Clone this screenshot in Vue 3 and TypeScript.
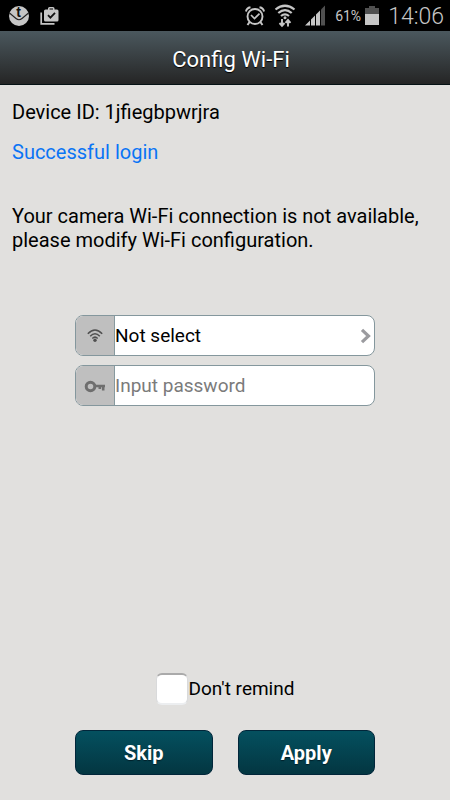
<script setup lang="ts">
import { ref } from 'vue'

const deviceId = ref<string>('1jfiegbpwrjra')
const network = ref<string>('')
const password = ref<string>('')
const dontRemind = ref<boolean>(false)
</script>

<template>
  <div class="screen">
    <div class="status">
      <svg class="badge-icon" width="22" height="22" viewBox="0 0 22 22" aria-hidden="true">
        <circle cx="11" cy="11" r="10" fill="#c6c6c6" />
        <path d="M1.5 8 L8 13.5 Q11 16 14 13.5 L20.5 8" fill="none" stroke="#222" stroke-width="1.1" />
        <text x="10.5" y="12" text-anchor="middle" class="badge-letter">t</text>
      </svg>
      <svg width="20" height="22" viewBox="0 0 20 22" aria-hidden="true">
        <path d="M1.2 7.5V18.800H14.5" fill="none" stroke="#c6c6c6" stroke-width="1.7" />
        <path d="M5.5 4.500H8V3.500Q8 2 9.500 2H13Q14.500 2 14.500 3.500V4.500H17Q18.500 4.500 18.500 6V15Q18.500 16.500 17 16.500H5.500Q4 16.500 4 15V6Q4 4.500 5.500 4.500ZM9.500 3.400V4.500H13V3.400Z" fill="#c6c6c6" fill-rule="evenodd" />
        <path d="M8 10.200L10.400 12.600L15 7.800" fill="none" stroke="#111" stroke-width="1.8" />
      </svg>
      <div class="status-right">
        <svg width="20" height="22" viewBox="0 0 20 22" fill="none" stroke="#c6c6c6" aria-hidden="true">
          <circle cx="10" cy="11.500" r="7.500" stroke-width="1.900" />
          <path d="M1 6.500Q1.500 3 5.500 2.300M19 6.500Q18.500 3 14.500 2.300M4.600 17L2.500 20M15.400 17L17.500 20" stroke-width="2" />
          <path d="M6 10L9.500 13.500L14.500 8.700" stroke-width="1.700" />
        </svg>
        <svg width="22" height="24" viewBox="0 0 22 24" fill="none" stroke="#c6c6c6" aria-hidden="true">
          <path d="M1.500 5.500Q11 -2 20.500 5.500M4.300 9Q11 3.200 17.700 9M7 12Q11 8.600 15 12" stroke-width="2.200" />
          <circle cx="11" cy="13.700" r="1.500" fill="#c6c6c6" stroke="none" />
          <path d="M8 15V22M5.500 19L8 21.800L10.500 19M14 22.500V16M11.500 18.800L14 16L16.500 18.800" stroke-width="1.900" />
        </svg>
        <svg width="21" height="21" viewBox="0 0 21 21" aria-hidden="true">
          <path d="M16 4.500L20 .5V20.500H16Z" fill="#505050" />
          <path d="M11 9.500L15 5.500V20.500H11ZM6 14.500L10 10.500V20.500H6ZM0 20.500L5 15.500V20.500Z" fill="#c6c6c6" />
        </svg>
        <div class="battery">
          <span class="percent">61%</span>
          <svg width="14" height="21" viewBox="0 0 14 21" aria-hidden="true">
            <path d="M0 3H4V1H10V3H14V9H0Z" fill="#505050" />
            <path d="M0 9H14V20H0Z" fill="#c6c6c6" />
          </svg>
        </div>
        <span class="clock">14:06</span>
      </div>
    </div>

    <header class="title-bar">
      <h1>Config Wi-Fi</h1>
    </header>

    <main class="content">
      <section class="info">
        <p>Device ID: {{ deviceId }}</p>
        <p class="login-state">Successful login</p>
        <p class="message">Your camera Wi-Fi connection is not available, please modify Wi-Fi configuration.</p>
      </section>

      <form id="wifi-form" class="fields" @submit.prevent>
        <div class="field">
          <label class="field-icon" for="network" aria-label="Wi-Fi network">
            <svg width="16" height="16" viewBox="0 0 16 16" fill="none" stroke="#505050" aria-hidden="true">
              <path d="M.8 5.800Q8 -1.800 15.200 5.800M3.200 8.200Q8 3.200 12.800 8.200M5.300 10.500Q8 7.800 10.700 10.500" stroke-width="1.500" />
              <circle cx="8" cy="12.300" r="1.700" fill="#505050" stroke="none" />
            </svg>
          </label>
          <select id="network" v-model="network">
            <option value="">Not select</option>
          </select>
          <svg class="chevron" width="12" height="16" viewBox="0 0 12 16" aria-hidden="true">
            <path d="M2 1.800L8.500 8L2 14.200" fill="none" stroke="#9b9b9f" stroke-width="3.200" />
          </svg>
        </div>
        <div class="field">
          <label class="field-icon" for="password" aria-label="Password">
            <svg width="22" height="14" viewBox="0 0 22 14" fill="none" stroke="#6e6e6e" aria-hidden="true">
              <circle cx="6.500" cy="7.500" r="4.300" stroke-width="3" />
              <path d="M11 7H21M19.200 6.500V11.500M15.800 6.500V10" stroke-width="2.600" />
            </svg>
          </label>
          <input id="password" v-model="password" type="password" placeholder="Input password" />
        </div>
      </form>

      <footer class="footer">
        <label class="remind">
          <input v-model="dontRemind" type="checkbox" />
          <span>Don't remind</span>
        </label>
        <div class="actions">
          <button type="button">Skip</button>
          <button type="submit" form="wifi-form">Apply</button>
        </div>
      </footer>
    </main>
  </div>
</template>

<style>
body {
  margin: 0;
  background: #e1e0de;
}
</style>

<style scoped>
.screen {
  display: flex;
  flex-direction: column;
  min-height: 100vh;
  font-family: Roboto, 'Liberation Sans', sans-serif;
  font-size: 20px;
  line-height: 24px;
  color: #000;
  background: #e1e0de;
}

.status {
  display: flex;
  align-items: center;
  gap: 10px;
  box-sizing: border-box;
  height: 31px;
  padding: 0 6px 0 8px;
  background: #000;
  color: #c6c6c6;
}

.status svg {
  display: block;
  flex: none;
}

.badge-letter {
  font-family: 'Liberation Sans', sans-serif;
  font-size: 14px;
  font-weight: 700;
  fill: #111;
}

.status-right {
  display: flex;
  align-items: center;
  gap: 9px;
  margin-left: auto;
}

.battery {
  display: flex;
  align-items: center;
  gap: 4px;
}

.percent {
  font-size: 14px;
}

.clock {
  padding-top: 2px;
  font-size: 23px;
  font-weight: 300;
}

.title-bar {
  display: flex;
  align-items: center;
  justify-content: center;
  box-sizing: border-box;
  height: 54px;
  padding: 4px 0 0 12px;
  border-bottom: 1px solid #061215;
  background: linear-gradient(#4b585e, #252525);
}

h1 {
  margin: 0;
  font-size: 22px;
  font-weight: 400;
  color: #fff;
  text-shadow: 0 1px 1px #000;
}

.content {
  display: flex;
  flex: 1;
  flex-direction: column;
  padding: 15px 12px 25px;
}

p {
  margin: 0 0 16px;
}

.login-state {
  color: #0a74f5;
}

.message {
  margin: 40px 0 0;
}

.fields,
.actions {
  width: 100%;
  max-width: 300px;
  margin: 0 auto;
}

.fields {
  display: grid;
  gap: 9px;
  margin-top: 63px;
}

.field {
  position: relative;
  display: flex;
  box-sizing: border-box;
  height: 41px;
  overflow: hidden;
  border: 1px solid #84979d;
  border-radius: 8px;
  background: #fff;
  font-size: 19px;
}

.field-icon {
  display: flex;
  flex: none;
  align-items: center;
  justify-content: center;
  width: 38px;
  border-right: 1px solid #87999e;
  background: #bfbfbf;
}

select,
.field input {
  flex: 1;
  min-width: 0;
  padding: 0;
  border: 0;
  outline: 0;
  appearance: none;
  background: transparent;
  font: inherit;
  color: #000;
}

.field input::placeholder {
  color: #7b7b7b;
  opacity: 1;
}

.chevron {
  position: absolute;
  top: 12px;
  right: 2px;
  pointer-events: none;
}

.footer {
  display: grid;
  gap: 25px;
  margin-top: auto;
}

.remind {
  display: flex;
  align-items: center;
  justify-content: center;
  gap: 1px;
  font-size: 19px;
}

.remind input {
  width: 32px;
  height: 32px;
  margin: 0;
  appearance: none;
  border: 1px solid #d9dadb;
  border-top: 2px solid #aaa;
  border-bottom: 2px solid #eceef0;
  border-radius: 6px;
  background: #fff;
}

.remind input:checked {
  background: #07485a;
}

.actions {
  display: grid;
  grid-template-columns: 1fr 1fr;
  gap: 25px;
}

button {
  height: 45px;
  padding: 0;
  border: 1px solid #01263a;
  border-radius: 8px;
  background: linear-gradient(#04505f, #033641);
  font: inherit;
  font-weight: 700;
  color: #fff;
  text-shadow: 0 1px 1px #00202a;
}
</style>
